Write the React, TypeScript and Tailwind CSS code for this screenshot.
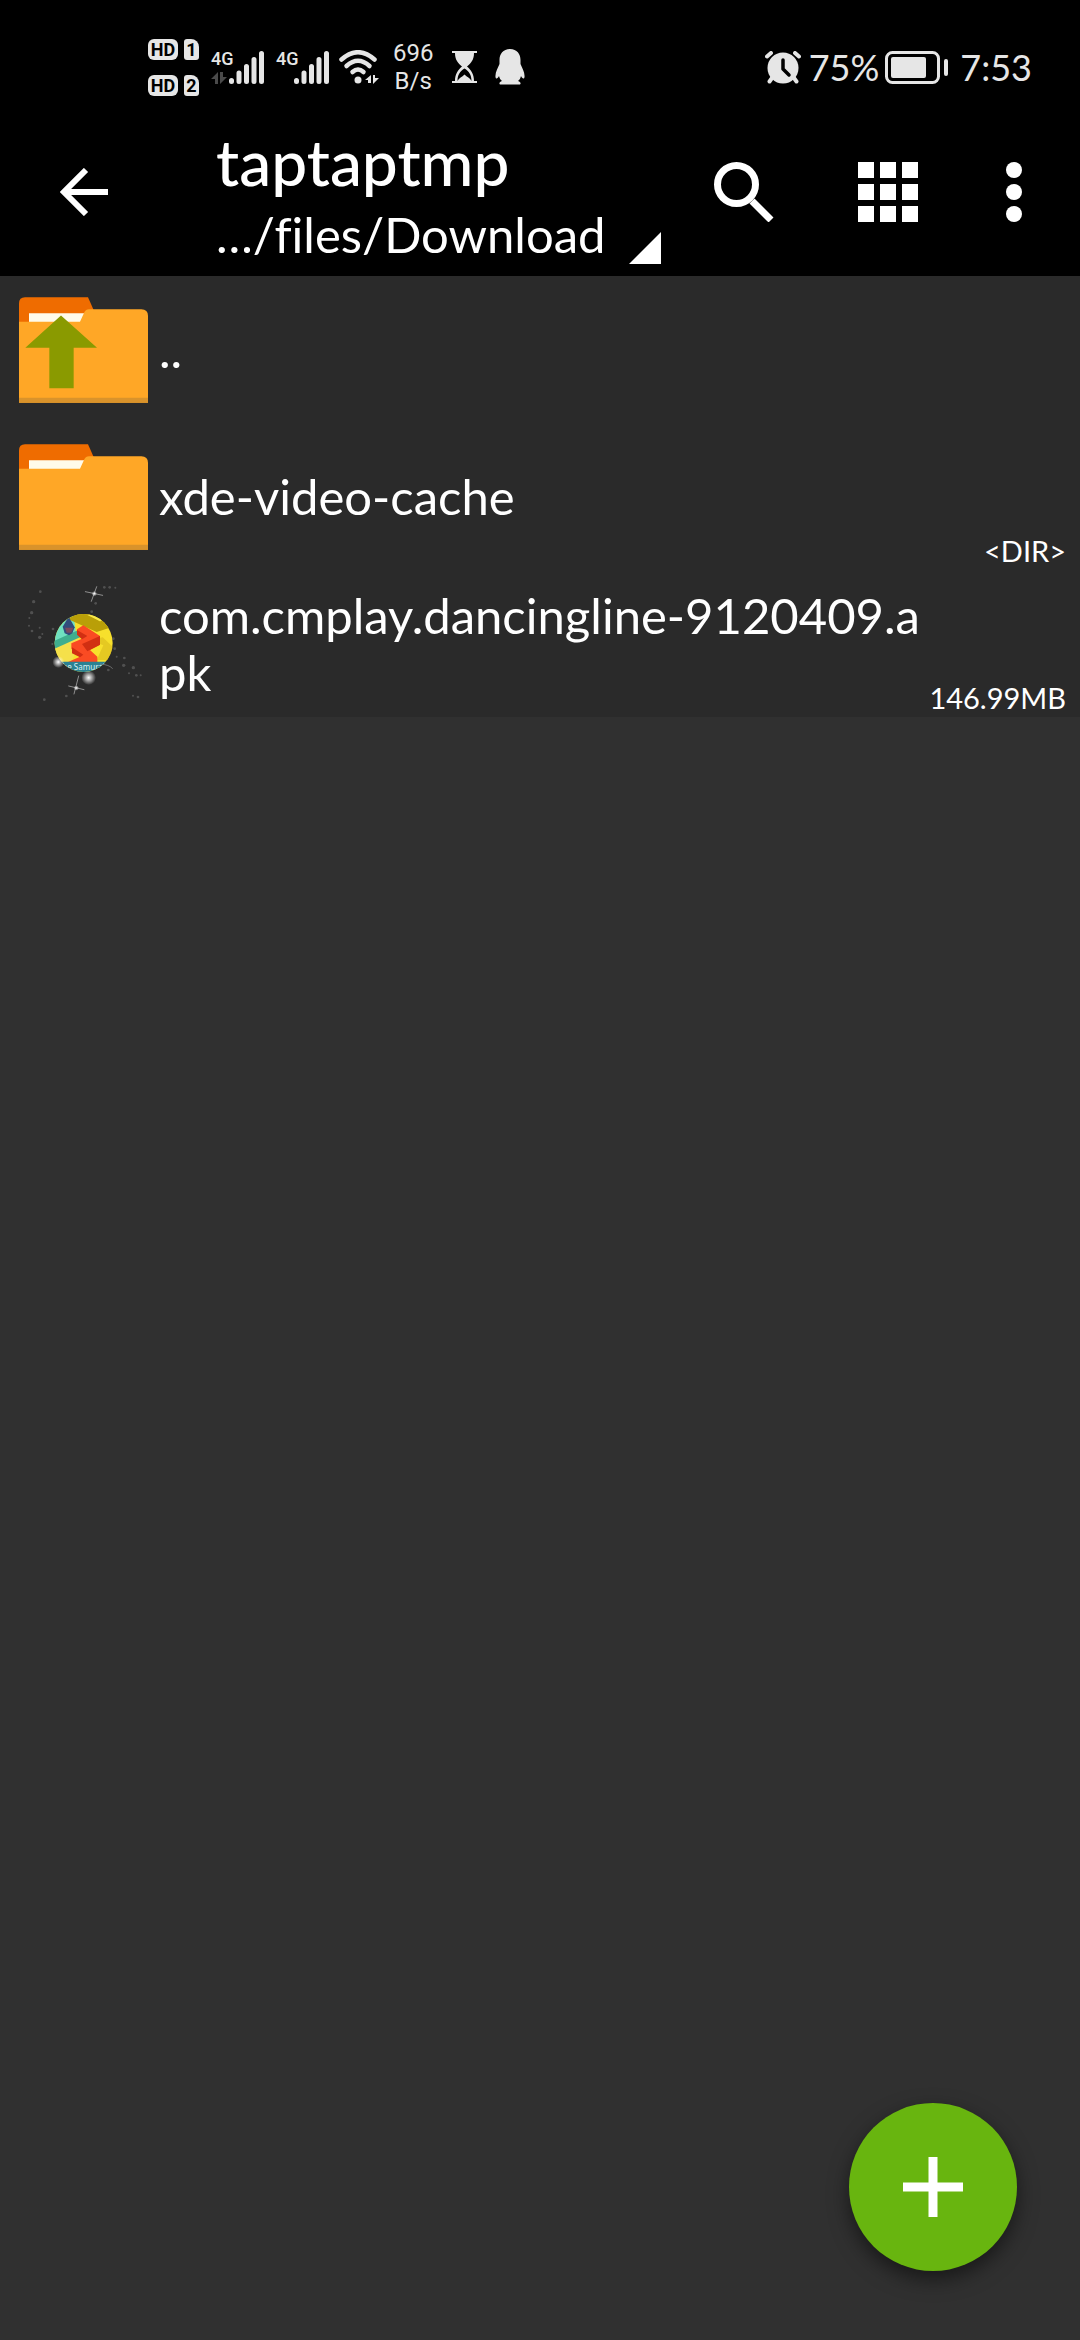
import type { ReactNode } from 'react'

interface FileEntry {
  name: string
  size: string
  icon: ReactNode
}

function SimBadge({ slot }: { slot: number }) {
  return (
    <div className="flex items-center gap-[6px]">
      <span className="flex h-[21px] w-[30px] items-center justify-center rounded-[6px] bg-[#e6e6e6] font-['Roboto',sans-serif] text-[18px] leading-[21px] font-bold text-black">
        HD
      </span>
      <span className="flex h-[21px] w-[15px] items-center justify-center rounded-[3px] rounded-tr-[8px] bg-[#e6e6e6] font-['Roboto',sans-serif] text-[18px] leading-[21px] font-bold text-black">
        {slot}
      </span>
    </div>
  )
}

function Signal({ arrows }: { arrows?: boolean }) {
  return (
    <div className="relative h-[33px] w-[53px]">
      <span className="absolute -top-[2px] left-0 font-['Liberation_Sans_Narrow','Roboto',sans-serif] text-[18px] leading-[20px] font-medium">
        4G
      </span>
      <svg viewBox="0 0 53 33" className="h-[33px] w-[53px]" aria-hidden="true">
        {arrows && <path d="M0 28 7 21V33H4V28ZM9 21H12V26H16L9 33Z" fill="#4a4a4a" />}
        <g stroke="#e6e6e6" strokeWidth="5" strokeLinecap="round">
          <path d="M20.500 29.500V30.500M28 22V30.500M35.500 15.500V30.500M43 8.500V30.500M50.500 2.500V30.500" />
        </g>
      </svg>
    </div>
  )
}

function WifiIcon() {
  return (
    <svg viewBox="0 0 42 34" className="h-[34px] w-[42px]" aria-hidden="true">
      <g fill="none" stroke="#e6e6e6" strokeWidth="4.500" strokeLinecap="round">
        <path d="M2.500 9.500Q19 -5 35.500 9.500" />
        <path d="M7.500 16Q19 5.500 30.500 16" />
        <path d="M13.500 22Q19 17 24.500 22" />
      </g>
      <circle cx="19" cy="30" r="3.500" fill="#e6e6e6" />
      <path d="M26 30 32 25V33H29V30ZM34 25H36V28H40L34 34Z" fill="#e6e6e6" />
    </svg>
  )
}

function HourglassIcon() {
  return (
    <svg viewBox="0 0 25 32" className="h-[32px] w-[25px]" aria-hidden="true" fill="#e6e6e6">
      <path d="M0 0H25V2H22C22 9 19 12 15 15.500 19 19 22 23 22 30H25V32H0V30H3C3 23 6 19 10 15.500 6 12 3 9 3 2H0Z" />
      <path d="M12.500 17.500C8 20 5.500 24 5.500 30 7 27 10 26 12.500 23.500 15 26 18 27 19.500 30 19.500 24 17 20 12.500 17.500Z" fill="#000" />
    </svg>
  )
}

function PenguinIcon() {
  return (
    <svg viewBox="0 0 30 36" className="h-[36px] w-[30px]" aria-hidden="true" fill="#e6e6e6">
      <path d="M15 0C8 0 4.500 5 4.500 11V15C3 19 0 23 .5 28 1 31 3 29 4 27 4.500 29 5.500 31 7 32 4 33 4 35 5 35.500H25C26 35 26 33 23 32 24.500 31 25.500 29 26 27 27 29 29 31 29.500 28 30 23 27 19 25.500 15V11C25.500 5 22 0 15 0Z" />
    </svg>
  )
}

function AlarmIcon() {
  return (
    <svg viewBox="0 0 36 33" className="h-[33px] w-[36px]" aria-hidden="true">
      <circle cx="18" cy="17" r="15.500" fill="#e6e6e6" />
      <g fill="none" stroke="#e6e6e6" strokeWidth="4" strokeLinecap="round">
        <path d="M2 5.500 6 2M34 5.500 30 2M7 27 4.500 30.500M29 27 31.500 30.500" />
      </g>
      <path d="M18 9V18L24 24" fill="none" stroke="#000" strokeWidth="3.500" strokeLinecap="round" strokeLinejoin="round" />
    </svg>
  )
}

function BatteryIcon() {
  return (
    <svg viewBox="0 0 63 33" className="h-[33px] w-[63px]" aria-hidden="true">
      <rect x="1.500" y="1.500" width="52" height="30" rx="6" fill="none" stroke="#e6e6e6" strokeWidth="3" />
      <rect x="6" y="6" width="35" height="21" rx="2" fill="#e6e6e6" />
      <rect x="59" y="8" width="4" height="17" rx="2" fill="#e6e6e6" />
    </svg>
  )
}

function StatusBar() {
  return (
    <div className="flex h-[108px] items-center justify-between pt-[26px] pr-12 pl-[148px] text-[#e6e6e6]">
      <div className="flex items-center">
        <div className="flex flex-col gap-[15px]">
          <SimBadge slot={1} />
          <SimBadge slot={2} />
        </div>
        <div className="ml-3 flex items-center gap-3">
          <Signal arrows />
          <Signal />
        </div>
        <div className="ml-[10px]">
          <WifiIcon />
        </div>
        <div className="ml-3 text-center font-['Roboto',sans-serif] text-[24px] leading-[28px]">
          696
          <br />
          B/s
        </div>
        <div className="ml-[19px] flex items-center gap-[18px]">
          <HourglassIcon />
          <PenguinIcon />
        </div>
      </div>
      <div className="flex items-center text-[36px] leading-[40px]">
        <AlarmIcon />
        <span className="ml-2">75%</span>
        <div className="ml-[6px]">
          <BatteryIcon />
        </div>
        <span className="ml-3">7:53</span>
      </div>
    </div>
  )
}

function Toolbar() {
  return (
    <div className="flex h-[168px] items-center pr-3">
      <button aria-label="Back" className="flex h-full w-[168px] shrink-0 items-center justify-center">
        <svg viewBox="0 0 48 48" className="size-12" fill="none" stroke="#fff" strokeWidth="6">
          <path d="M26 2 4 24 26 46M4 24H48" />
        </svg>
      </button>
      <button className="ml-12 flex h-full min-w-0 flex-1 items-end pb-3 text-left">
        <span className="min-w-0 [font-variant-ligatures:none]">
          <span className="mb-1 block truncate text-[64px] leading-[76px] font-medium">taptaptmp</span>
          <span className="block truncate text-[49px] leading-[60px]">…/files/Download</span>
        </span>
        <svg viewBox="0 0 33 33" className="ml-6 size-8 shrink-0" fill="#fff" aria-hidden="true">
          <path d="M33 0V33H0Z" />
        </svg>
      </button>
      <button aria-label="Search" className="flex h-full w-[144px] shrink-0 items-center justify-center">
        <svg viewBox="0 0 60 60" className="size-[60px]" fill="none" stroke="#fff">
          <circle cx="22.500" cy="22.500" r="19" strokeWidth="7" />
          <path d="M38 39 57 58" strokeWidth="7" />
        </svg>
      </button>
      <button aria-label="Grid view" className="flex h-full w-[144px] shrink-0 items-center justify-center">
        <svg viewBox="0 0 60 60" className="size-[60px]" fill="#fff">
          {[0, 22, 44].map((y) => [0, 22, 44].map((x) => <rect key={`${x}-${y}`} x={x} y={y} width="16" height="16" />))}
        </svg>
      </button>
      <button aria-label="More options" className="flex h-full w-[108px] shrink-0 items-center justify-center">
        <svg viewBox="0 0 16 60" className="h-[60px] w-4" fill="#fff">
          <circle cx="8" cy="8" r="8" />
          <circle cx="8" cy="30" r="8" />
          <circle cx="8" cy="52" r="8" />
        </svg>
      </button>
    </div>
  )
}

function FolderIcon({ up }: { up?: boolean }) {
  return (
    <svg viewBox="57 79 387 317" className="h-[106px] w-[129px]" aria-hidden="true">
      <path d="M57 160V97Q57 79 75 79H264L284 124V160Z" fill="#ef6c00" />
      <path d="M87 127H262V160H87Z" fill="#fffbea" />
      <path d="M57 153H240L253 124Q257 115 267 115H424Q444 115 444 135V396H57Z" fill="#ffa726" />
      <path d="M57 381H444V396H57Z" fill="#d9932b" />
      {up && <path d="M183 134 291 231H221V352H148V231H76Z" fill="#8a9a00" />}
    </svg>
  )
}

// faint dust around the launcher icon
const dust = [
  [121, 95, 4], [101, 125, 5], [95, 158, 5], [88, 174, 3], [87, 197, 3], [96, 213, 4], [119, 232, 5], [119, 203, 3],
  [313, 82, 4], [329, 82, 4], [346, 83, 3], [287, 130, 4], [275, 155, 4], [159, 207, 4], [127, 222, 3], [344, 266, 4],
  [373, 294, 4], [371, 316, 5], [400, 323, 5], [409, 346, 4], [422, 346, 3], [387, 340, 3], [325, 330, 4], [399, 407, 3],
  [414, 411, 4], [133, 419, 4], [199, 408, 4], [340, 236, 4], [157, 252, 3], [350, 290, 3],
]

function DancingLineIcon() {
  return (
    <svg viewBox="57 57 387 387" className="size-[129px]" aria-hidden="true">
      <defs>
        <clipPath id="disc">
          <circle cx="251" cy="249" r="87" />
        </clipPath>
        <radialGradient id="glow">
          <stop offset="0" stopColor="#fff" />
          <stop offset="0.300" stopColor="#fff" stopOpacity="0.700" />
          <stop offset="1" stopColor="#fff" stopOpacity="0" />
        </radialGradient>
      </defs>
      {dust.map(([x, y, r]) => (
        <circle key={`${x}-${y}`} cx={x} cy={y} r={r} fill="#6b6b6b" opacity="0.600" />
      ))}
      <g clipPath="url(#disc)">
        <path d="M160 160H340V340H160Z" fill="#f7e02c" />
        <path d="M160 160H220L232 250 160 262Z" fill="#6fe0c0" />
        <path d="M160 262 232 222 240 250 214 306H160Z" fill="#f5e04a" />
        <path d="M160 244 240 208V232L160 268Z" fill="#3fae8e" />
        <path d="M215 160H265L300 184 340 176V200L290 216 205 178Z" fill="#b99f08" />
        <path d="M262 165 300 184 330 168 300 158Z" fill="#f9e94a" />
        <path d="M270 240 310 256 290 300H340V262L308 232Z" fill="#d8b91c" opacity="0.600" />
        <path d="M206 170 224 202 217 220 207 226 194 220 188 200Z" fill="#314c7c" />
        <path d="M195 203H220L214 218H200Z" fill="#7b4a5e" />
        <path d="M231 208 250 196 300 228V254L270 270 292 290V306H204L240 290 214 266V250L246 236 231 222Z" fill="#fa4b23" />
        <path d="M246 252 300 228V254L262 274ZM216 262 250 284 240 292 216 280ZM231 210 262 228 246 238 231 224Z" fill="#d12f12" />
        <path d="M160 305H340V340H160Z" fill="#2b8192" />
        <text x="187" y="329" fill="#d8f2f5" fontSize="24" fontFamily="Noto Sans, sans-serif">
          he Samurai
        </text>
      </g>
      <g stroke="#a8a8a8" strokeWidth="3" strokeLinecap="round" opacity="0.800">
        <path d="M290 80 274 124M256 95 308 106M236 348 222 402M206 378 252 389" />
      </g>
      <path d="M300 312Q328 314 338 326" fill="none" stroke="#8c8c8c" strokeWidth="2" />
      <circle cx="283" cy="101" r="8" fill="url(#glow)" />
      <circle cx="229" cy="384" r="8" fill="url(#glow)" />
      <circle cx="175" cy="306" r="18" fill="url(#glow)" />
      <circle cx="266" cy="353" r="22" fill="url(#glow)" />
    </svg>
  )
}

const files: FileEntry[] = [
  { name: '..', size: '', icon: <FolderIcon up /> },
  { name: 'xde-video-cache', size: '<DIR>', icon: <FolderIcon /> },
  { name: 'com.cmplay.dancingline-9120409.apk', size: '146.99MB', icon: <DancingLineIcon /> },
]

export default function App() {
  return (
    <div className="min-h-screen bg-[#303030] font-['Lato',sans-serif] text-white">
      <header className="bg-black">
        <StatusBar />
        <Toolbar />
      </header>
      <ul>
        {files.map((file) => (
          <li key={file.name}>
            <button className="flex h-[147px] w-full items-center bg-[#2a2a2a] pr-[14px] pl-[19px] text-left">
              <span className="shrink-0">{file.icon}</span>
              <span className="ml-[11px] min-w-0 flex-1 text-[49px] leading-[57px] break-all">{file.name}</span>
              <span className="shrink-0 self-end text-[29px] leading-[38px]">{file.size}</span>
            </button>
          </li>
        ))}
      </ul>
      <button
        aria-label="Add"
        className="fixed right-[63px] bottom-[69px] flex size-[168px] items-center justify-center rounded-full bg-[#68b50f] shadow-[0_8px_20px_rgba(0,0,0,0.5)]"
      >
        <svg viewBox="0 0 60 60" className="size-[60px]" stroke="#fff" strokeWidth="9">
          <path d="M30 0V60M0 30H60" />
        </svg>
      </button>
    </div>
  )
}
